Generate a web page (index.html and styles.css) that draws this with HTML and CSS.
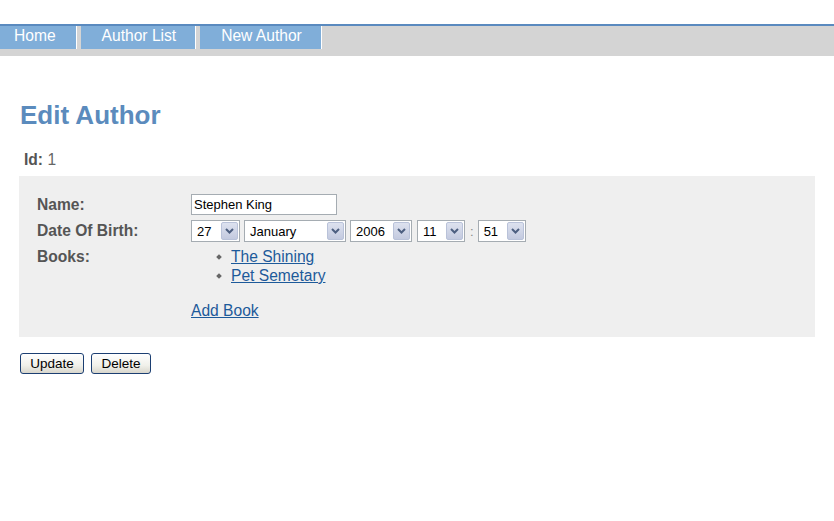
FILE: index.html
```html
<!DOCTYPE html>
<html lang="en">
<head>
<meta charset="UTF-8" />
<title>Edit Author</title>
<link rel="stylesheet" href="styles.css">
</head>
<body>

<div class="top-space"></div>

<nav class="menu">
  <a class="menu-tab first" href="#">Home</a>
  <a class="menu-tab" href="#">Author List</a>
  <a class="menu-tab" href="#">New Author</a>
</nav>

<main class="content">
  <h1>Edit Author</h1>

  <div class="id-line"><span class="label">Id:</span> 1</div>

  <form class="edit-form">
    <div class="dialog">
      <div class="row">
        <label class="label" for="name">Name:</label>
        <input class="text-input" id="name" type="text" value="Stephen King" />
      </div>

      <div class="row">
        <span class="label">Date Of Birth:</span>
        <div class="date-picker">
          <span class="select day"><span class="select-value">27</span><span class="select-btn"><svg width="9" height="6" viewBox="0 0 9 6"><path d="M1 1 L4.5 4.5 L8 1" fill="none" stroke="#4d5f80" stroke-width="2"/></svg></span></span>
          <span class="select month"><span class="select-value">January</span><span class="select-btn"><svg width="9" height="6" viewBox="0 0 9 6"><path d="M1 1 L4.5 4.5 L8 1" fill="none" stroke="#4d5f80" stroke-width="2"/></svg></span></span>
          <span class="select year"><span class="select-value">2006</span><span class="select-btn"><svg width="9" height="6" viewBox="0 0 9 6"><path d="M1 1 L4.5 4.5 L8 1" fill="none" stroke="#4d5f80" stroke-width="2"/></svg></span></span>
          <span class="select hour"><span class="select-value">11</span><span class="select-btn"><svg width="9" height="6" viewBox="0 0 9 6"><path d="M1 1 L4.5 4.5 L8 1" fill="none" stroke="#4d5f80" stroke-width="2"/></svg></span></span>
          <span class="colon">:</span>
          <span class="select minute"><span class="select-value">51</span><span class="select-btn"><svg width="9" height="6" viewBox="0 0 9 6"><path d="M1 1 L4.5 4.5 L8 1" fill="none" stroke="#4d5f80" stroke-width="2"/></svg></span></span>
        </div>
      </div>

      <div class="row books-row">
        <span class="label">Books:</span>
        <div class="books">
          <ul class="book-list">
            <li><a href="#">The Shining</a></li>
            <li><a href="#">Pet Semetary</a></li>
          </ul>
          <a class="add-book" href="#">Add Book</a>
        </div>
      </div>
    </div>

    <div class="buttons">
      <button class="btn update" type="button">Update</button>
      <button class="btn delete" type="button">Delete</button>
    </div>
  </form>
</main>

</body>
</html>
```

FILE: styles.css
```css
:root {
  --nav-line: #5a8abf;
  --nav-bg: #d4d4d4;
  --tab-bg: #80aed9;
  --heading: #5b8bbd;
  --label: #555555;
  --panel-bg: #efefef;
  --link: #1d5a9a;
  --field-border: #a5acb2;
}
* {
  box-sizing: border-box;
}
body {
  margin: 0;
  font-family: 'Liberation Sans', Arial, sans-serif;
  font-size: 15.6px;
  color: #555;
  background: #fff;
}
.top-space {
  height: 24px;
}
nav.menu {
  display: flex;
  height: 32px;
  border-top: 2px solid var(--nav-line);
  background: var(--nav-bg);
  align-items: flex-start;
}
.menu-tab {
  display: block;
  height: 23px;
  padding: 0 19px 3px 21px;
  line-height: 20px;
  margin-right: 4px;
  background: var(--tab-bg);
  border-right: 1px solid #fff;
  color: #fff;
  text-decoration: none;
}
.menu-tab.first {
  padding-left: 14px;
  padding-right: 20px;
}
main.content {
  padding: 0 19px;
}
h1 {
  margin: 44px 0 0 1px;
  font-size: 26px;
  line-height: 30px;
  color: var(--heading);
}
.id-line {
  margin-top: 21px;
  padding-left: 5px;
  line-height: 18px;
  color: #666;
}
.label {
  font-weight: bold;
  color: var(--label);
}
.edit-form {
  margin-top: 7px;
}
.dialog {
  background: var(--panel-bg);
  padding: 18px 18px 17px;
}
.row {
  display: flex;
  align-items: center;
}
.row + .row {
  margin-top: 5px;
}
.row .label {
  width: 154px;
  flex-shrink: 0;
}
.text-input {
  width: 146px;
  height: 21px;
  border: 1px solid var(--field-border);
  padding: 0 2px;
  font-family: 'Liberation Sans', Arial, sans-serif;
  font-size: 13px;
  color: #000;
  background: #fff;
}
.date-picker {
  display: flex;
  align-items: center;
  gap: 4px;
}
.select {
  display: flex;
  align-items: center;
  height: 22px;
  border: 1px solid var(--field-border);
  background: #fff;
  padding: 1px;
  font-size: 13px;
  color: #000;
}
.select-value {
  flex-grow: 1;
  padding-left: 4px;
}
.select-btn {
  display: flex;
  align-items: center;
  justify-content: center;
  width: 17px;
  height: 18px;
  border: 1px solid #b9c2d9;
  border-radius: 2px;
  background: linear-gradient(#dde2ef, #c3cadf);
}
.select.day { width: 49px; }
.select.month { width: 102px; }
.select.year { width: 62px; }
.select.hour { width: 48px; margin-left: 1px; }
.select.minute { width: 48px; }
.colon {
  font-size: 13px;
  color: #888;
  padding-left: 1px;
}
.row.books-row {
  align-items: flex-start;
  margin-top: 5px;
}
.books-row .label {
  line-height: 19px;
}
.books {
  line-height: 19px;
}
.book-list {
  list-style: none;
  margin: 0;
  padding: 0 0 0 26px;
}
.book-list li {
  display: flex;
  align-items: center;
}
.book-list li::before {
  content: "";
  width: 4px;
  height: 4px;
  transform: rotate(45deg);
  background: #666;
  margin-right: 10px;
}
a {
  color: var(--link);
}
.add-book {
  display: inline-block;
  margin-top: 16px;
}
.buttons {
  display: flex;
  gap: 7px;
  margin-top: 16px;
  padding-left: 1px;
}
.btn {
  height: 21px;
  padding: 0 6px;
  border: 1px solid #1c3f72;
  border-radius: 3px;
  background: linear-gradient(#ffffff, #f0f0ea 60%, #d8d6cc);
  font-family: 'Liberation Sans', Arial, sans-serif;
  font-size: 13.5px;
  color: #000;
  cursor: pointer;
}
.btn.update { width: 64px; }
.btn.delete { width: 60px; }
```
